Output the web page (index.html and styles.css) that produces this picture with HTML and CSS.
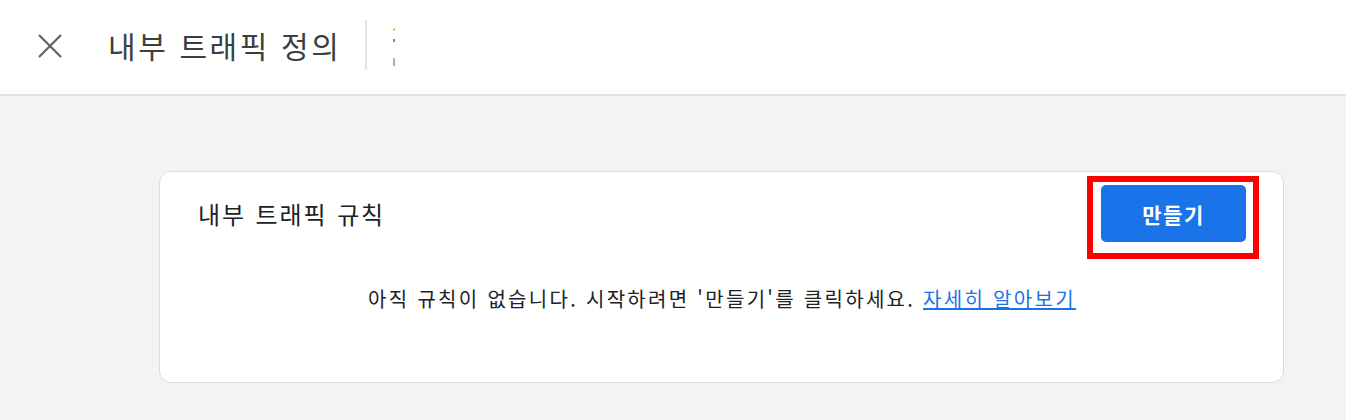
FILE: index.html
```html
<!DOCTYPE html>
<html lang="ko">
<head>
<meta charset="utf-8">
<link rel="stylesheet" href="styles.css">
</head>
<body>
<header class="topbar">
  <button class="close" aria-label="닫기">
    <svg width="24" height="24" viewBox="0 0 24 24"><path d="M1 1L23 23M23 1L1 23" stroke="#5f6368" stroke-width="2.2" fill="none"/></svg>
  </button>
  <h1 class="title">내부 트래픽 정의</h1>
  <span class="divider"></span>
  <span class="artifact"></span>
</header>
<main class="content">
  <section class="card">
    <div class="card-head">
      <h2 class="card-title">내부 트래픽 규칙</h2>
      <div class="btn-wrap">
        <button class="btn-create">만들기</button>
        <span class="highlight"></span>
      </div>
    </div>
    <p class="empty">아직 규칙이 없습니다. 시작하려면 '만들기'를 클릭하세요. <a href="#" class="link">자세히 알아보기</a></p>
  </section>
</main>
</body>
</html>
```

FILE: styles.css
```css
* { box-sizing: border-box; }
html, body { margin: 0; padding: 0; }
body {
  width: 1346px;
  height: 420px;
  overflow: hidden;
  background: #f1f3f4;
  font-family: "Noto Sans CJK KR", "Noto Sans", sans-serif;
  color: #202124;
}
.topbar {
  height: 96px;
  background: #fff;
  border-bottom: 2px solid #dfe1e5;
  display: flex;
  align-items: center;
  padding-left: 38px;
}
.close {
  border: 0;
  background: none;
  padding: 0;
  width: 24px;
  height: 24px;
  display: flex;
  margin-top: -2px;
}
.title {
  margin: -4px 0 0 46px;
  font-size: 30px;
  font-weight: 400;
  color: #3c4043;
  letter-spacing: 2.6px;
  word-spacing: 0;
}
.divider {
  width: 2px;
  height: 50px;
  background: #e3e4e8;
  margin-left: 24px;
  margin-top: -4px;
}
.artifact {
  width: 2px;
  height: 40px;
  margin-left: 26px;
  margin-top: -2px;
  background: linear-gradient(#fff 0 2px, #f0c080 2px 5px, #fff 5px 13px, #c87050 13px 16px, #fff 16px 32px, #d0a0b0 32px 40px);
}
.content {
  padding: 75px 62px 0 159px;
}
.card {
  background: #fff;
  border: 1px solid #dadce0;
  border-radius: 12px;
  height: 212px;
  padding: 13px 37px 0 38px;
}
.card-head {
  display: flex;
  justify-content: space-between;
  align-items: center;
  height: 57px;
}
.card-title {
  margin: 0;
  font-size: 24px;
  font-weight: 400;
  color: #202124;
  letter-spacing: 1.9px;
  word-spacing: 1px;
}
.btn-wrap {
  position: relative;
}
.btn-create {
  display: block;
  width: 145px;
  height: 57px;
  border: 0;
  border-radius: 5px;
  background: #1a73e8;
  color: #fff;
  font-family: inherit;
  font-size: 21px;
  font-weight: 700;
  letter-spacing: 1.5px;
}
.highlight {
  position: absolute;
  left: -14px;
  top: -9px;
  width: 172px;
  height: 83px;
  border: 6px solid #ff0000;
  pointer-events: none;
}
.empty {
  margin: 44px 0 0;
  text-align: center;
  font-size: 20px;
  line-height: 26px;
  color: #202124;
  letter-spacing: 2.3px;
  word-spacing: 0;
}
.link {
  color: #1a73e8;
  text-decoration: underline;
}
```
